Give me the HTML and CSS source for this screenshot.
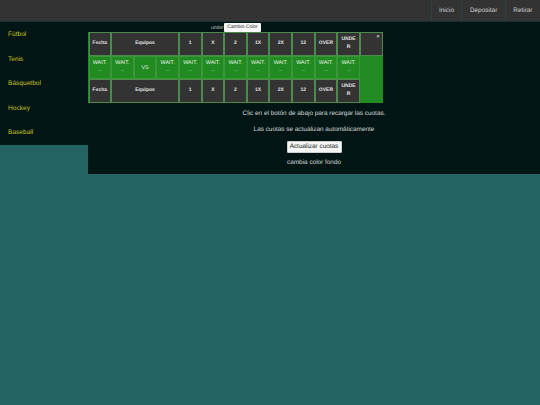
FILE: index.html
```html
<!DOCTYPE html>
<html lang="es">
<head>
<meta charset="utf-8">
<title>Cuotas</title>
<link rel="stylesheet" href="styles.css">
</head>
<body>
<header class="topbar">
  <nav class="topnav">
    <a class="topnav-item">Inicio</a>
    <a class="topnav-item">Depositar</a>
    <a class="topnav-item">Retirar</a>
  </nav>
</header>
<div class="layout">
  <aside class="sidebar">
    <a class="sport">Fútbol</a>
    <a class="sport">Tenis</a>
    <a class="sport">Básquetbol</a>
    <a class="sport">Hockey</a>
    <a class="sport">Baseball</a>
  </aside>
  <main class="main">
    <div class="caption">
      <span class="under">under</span>
      <span class="tooltip">Cambio Color</span>
    </div>
    <div class="odds">
      <div class="cell head">Fecha</div>
      <div class="cell head span3">Equipos</div>
      <div class="cell head">1</div>
      <div class="cell head">X</div>
      <div class="cell head">2</div>
      <div class="cell head">1X</div>
      <div class="cell head">2X</div>
      <div class="cell head">12</div>
      <div class="cell head">OVER</div>
      <div class="cell head">UNDE<br>R</div>
      <div class="cell head close">×</div>

      <div class="cell wait">WAIT.<small>--</small></div>
      <div class="cell wait">WAIT.<small>--</small></div>
      <div class="cell wait vs">VS</div>
      <div class="cell wait">WAIT.<small>--</small></div>
      <div class="cell wait">WAIT.<small>--</small></div>
      <div class="cell wait">WAIT.<small>--</small></div>
      <div class="cell wait">WAIT.<small>--</small></div>
      <div class="cell wait">WAIT.<small>--</small></div>
      <div class="cell wait">WAIT.<small>--</small></div>
      <div class="cell wait">WAIT.<small>--</small></div>
      <div class="cell wait">WAIT.<small>--</small></div>
      <div class="cell wait">WAIT.<small>--</small></div>
      <div class="filler"></div>

      <div class="cell head">Fecha</div>
      <div class="cell head span3">Equipos</div>
      <div class="cell head">1</div>
      <div class="cell head">X</div>
      <div class="cell head">2</div>
      <div class="cell head">1X</div>
      <div class="cell head">2X</div>
      <div class="cell head">12</div>
      <div class="cell head">OVER</div>
      <div class="cell head">UNDE<br>R</div>
      <div class="filler"></div>
    </div>
    <p class="note first">Clic en el botón de abajo para recargar las cuotas.</p>
    <p class="note second">Las cuotas se actualizan automáticamente</p>
    <button class="refresh" type="button">Actualizar cuotas</button>
    <p class="note last">cambia color fondo</p>
  </main>
</div>
</body>
</html>
```
FILE: styles.css
```css
* { box-sizing: border-box; }
html, body { margin: 0; height: 100%; }
body {
  background: #246361;
  font-family: "Liberation Sans", Arial, sans-serif;
  color: #e6e6e6;
  overflow: hidden;
  text-rendering: geometricPrecision;
}
.topbar {
  height: 21.5px;
  background: #333333;
  border-bottom: 1px solid #1d2f2f;
  display: flex;
  justify-content: flex-end;
}
.topnav { display: flex; }
.topnav-item {
  display: flex;
  align-items: center;
  padding: 0 7.5px;
  font-size: 6.4px;
  color: #d0d0d0;
  border-left: 1px solid #2b4343;
}
.layout { display: flex; align-items: flex-start; }
.sidebar {
  width: 88px;
  height: 123.5px;
  background: #001514;
  display: flex;
  flex-direction: column;
  padding-top: 0.8px;
}
.sport {
  height: 24.7px;
  display: flex;
  align-items: center;
  padding-left: 8px;
  font-size: 6.6px;
  color: #c8c020;
}
.main {
  flex: 1;
  height: 152.5px;
  background: #001514;
  display: flex;
  flex-direction: column;
  align-items: flex-start;
}
.caption {
  position: relative;
  height: 10.2px;
  width: 295px;
  flex: none;
}
.under {
  position: absolute;
  left: 123px;
  top: 3px;
  font-size: 5px;
  color: #c0c0c0;
}
.tooltip {
  position: absolute;
  left: 136px;
  top: 1px;
  width: 37px;
  height: 9.5px;
  background: #f8f8f8;
  color: #333333;
  font-size: 5px;
  display: flex;
  align-items: center;
  justify-content: center;
  border-radius: 1px;
}
.odds {
  width: 295px;
  display: grid;
  grid-template-columns: repeat(13, 1fr);
  grid-auto-rows: 23.5px;
  padding: 0.5px;
  background: #218a21;
  flex: none;
}
.cell {
  display: flex;
  flex-direction: column;
  align-items: center;
  justify-content: center;
  text-align: center;
  font-size: 5px;
  line-height: 7.5px;
}
.head {
  background: #333333;
  border: 1.2px solid #4d8a4d;
  font-weight: bold;
  color: #e0e0e0;
}
.span3 { grid-column: span 3; }
.close {
  justify-content: flex-start;
  align-items: flex-end;
  padding: 1px 2px;
  line-height: 6px;
}
.wait {
  border: 1.2px solid #3a963a;
  color: #e4f2e4;
  font-size: 5.4px;
  line-height: 8.5px;
}
.wait small { font-size: 5px; display: block; color: #a4d4a4; }
.vs { padding-top: 2px; }
.note {
  width: 100%;
  margin: 0;
  text-align: center;
  font-size: 6.4px;
  line-height: 8px;
  color: #d8d8d8;
}
.first { margin-top: 7px; }
.second { margin-top: 7.5px; }
.refresh {
  align-self: center;
  margin-top: 7.5px;
  width: 55px;
  height: 11.5px;
  padding: 0;
  background: #f6f6f6;
  border: 1px solid #cfcfcf;
  border-radius: 1px;
  font: 6.4px "Liberation Sans", Arial, sans-serif;
  color: #222222;
  text-rendering: geometricPrecision;
}
.last { margin-top: 6.5px; }
```
